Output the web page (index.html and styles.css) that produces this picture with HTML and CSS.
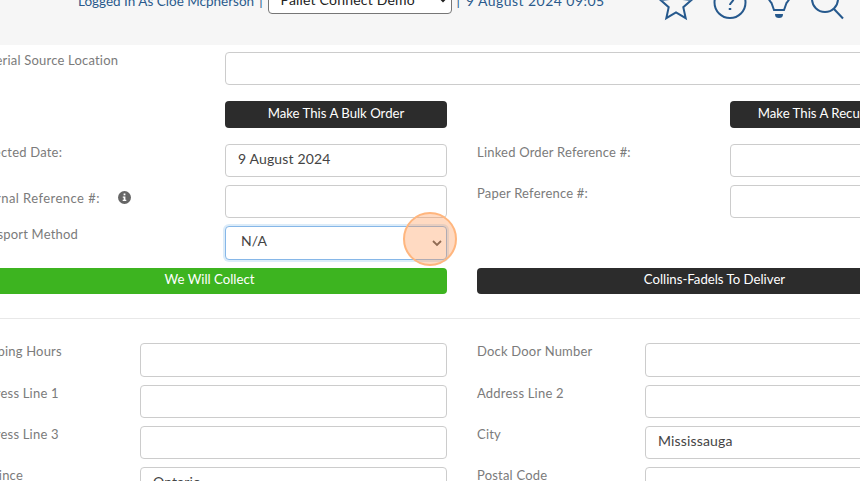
FILE: index.html
```html
<!DOCTYPE html>
<html lang="en">
<head>
<meta charset="utf-8">
<title>Order</title>
<link rel="stylesheet" href="styles.css">
</head>
<body>
<div class="page">
  <header class="topbar">
    <div class="userinfo">
      <span>Logged In As Cloe Mcpherson</span>
      <span>|</span>
      <select class="company"><option>Pallet Connect Demo</option></select>
      <span>|</span>
      <span class="stamp">9 August 2024 09:05</span>
    </div>
    <div class="tools">
      <svg class="tool star" width="36" height="36" viewBox="0 -2 36 36"><path d="M18 2.500l4.600 10.300 11 1.100-8.300 7.300 2.400 11-9.700-5.700-9.700 5.700 2.400-11-8.300-7.300 11-1.100z"/></svg>
      <svg class="tool help" width="36" height="36" viewBox="0 -.5 36 36"><circle cx="18" cy="18" r="15.500"/><path d="M14.500 14.500c0-4.500 7-4.500 7 0 0 2.800-3.500 3-3.500 6"/><path class="dot" d="M18 23.500v2"/></svg>
      <svg class="tool" width="36" height="36" viewBox="0 1 36 36"><path d="M13 27l-2.500-7C8 17 6 14.500 6 11 6 4.500 11.500 0 18 0s12 4.500 12 11c0 3.500-2 6-4.500 9L23 27z"/><path class="solid" d="M14 31h8c0 3-1.500 4-4 4s-4-1-4-4z"/></svg>
      <svg class="tool" width="36" height="36" viewBox="0 0 36 36"><circle cx="16" cy="15" r="13"/><path d="M25 25l9 9.500"/></svg>
    </div>
  </header>

  <main class="form">
    <div class="field wide">
      <label class="lbl">Material Source Location</label>
      <input class="ctl" type="text">
    </div>

    <div class="pair gap-y">
      <div class="field"><span></span><button class="btn dark">Make This A Bulk Order</button></div>
      <div class="field"><span></span><button class="btn dark">Make This A Recurring Order</button></div>
    </div>

    <div class="pair">
      <div class="field"><label class="lbl">Expected Date:</label><input class="ctl" type="text" value="9 August 2024"></div>
      <div class="field"><label class="lbl">Linked Order Reference #:</label><input class="ctl" type="text"></div>
    </div>
    <div class="pair">
      <div class="field">
        <label class="lbl lbl-info"><span class="wider">Internal Reference #:</span>
          <svg class="info" width="13" height="13" viewBox="0 0 13 13"><circle cx="6.500" cy="6.500" r="6.500"/><rect class="glyph" x="5.600" y="2.500" width="1.800" height="1.800"/><path class="glyph" d="M4.800 5.500h2.600v3.300h.9v1.200H4.700V8.800h1V6.700h-.9z"/></svg>
        </label>
        <input class="ctl" type="text">
      </div>
      <div class="field"><label class="lbl">Paper Reference #:</label><input class="ctl" type="text"></div>
    </div>
    <div class="pair">
      <div class="field">
        <label class="lbl">Transport Method</label>
        <select class="ctl picker"><option>N/A</option></select>
      </div>
      <div></div>
    </div>
    <div class="pair">
      <button class="btn green">We Will Collect</button>
      <button class="btn dark short">Collins-Fadels To Deliver</button>
    </div>

    <hr class="rule">

    <div class="pair narrow">
      <div class="field"><label class="lbl">Shipping Hours</label><input class="ctl tall" type="text"></div>
      <div class="field"><label class="lbl">Dock Door Number</label><input class="ctl tall" type="text"></div>
    </div>
    <div class="pair narrow">
      <div class="field"><label class="lbl">Address Line 1</label><input class="ctl" type="text"></div>
      <div class="field"><label class="lbl">Address Line 2</label><input class="ctl" type="text"></div>
    </div>
    <div class="pair narrow">
      <div class="field"><label class="lbl">Address Line 3</label><input class="ctl" type="text"></div>
      <div class="field"><label class="lbl">City</label><input class="ctl" type="text" value="Mississauga"></div>
    </div>
    <div class="pair narrow">
      <div class="field"><label class="lbl">Province</label><input class="ctl" type="text" value="Ontario"></div>
      <div class="field"><label class="lbl">Postal Code</label><input class="ctl" type="text"></div>
    </div>
  </main>
</div>
<div class="spot"></div>
</body>
</html>
```
FILE: styles.css
```css
* { box-sizing: border-box; }
html, body { margin: 0; height: 100%; overflow: hidden; background: #fff; }
body { position: relative; font-family: Lato, "Liberation Sans", sans-serif; font-size: 14px; color: #444; }
.page { width: 980px; margin: -31px 0 0 -28px; }

.topbar { display: flex; height: 76px; background: #f6f6f6; padding: 0 0 0 106px; color: #2a5a8c; font-size: 13.5px; }
.userinfo { display: flex; align-items: flex-start; gap: 5px; width: 580px; height: 46px; line-height: 30px; }
.company { width: 184px; height: 30px; margin: 15px 0 0; border: 1px solid #767676; border-radius: 4px; background: #fff; color: #222; font: inherit; font-size: 14px; letter-spacing: .2px; padding: 0 8px; }
.userinfo span { margin-top: 17px; }
.userinfo .stamp { margin-left: 1px; font-size: 14px; letter-spacing: .45px; }
.tools { display: flex; gap: 12px; padding-top: 15px; }
.tool { fill: none; stroke: #26598d; stroke-width: 2; overflow: visible; }
.tool.star { margin-right: 5.5px; }
.tool.help { margin-right: 1.5px; }
.tool .solid { stroke: none; fill: #26598d; }
.tool .dot { stroke-width: 2.500; }

.form { width: 980px; padding-top: 7px; }
.pair { display: grid; grid-template-columns: 475px 475px; column-gap: 30px; margin-bottom: 8px; }
.field { display: grid; grid-template-columns: 253px 1fr; }
.wide { width: 980px; margin-bottom: 16px; }
.gap-y { margin-bottom: 16px; }
.narrow .field { grid-template-columns: 168px 1fr; }

.lbl { color: #7b7b7b; font-size: 13px; line-height: 17px; letter-spacing: .2px; }
.lbl-info { display: flex; align-items: flex-start; gap: 18px; line-height: 26px; }
.wider { letter-spacing: .45px; }
.info { margin-top: 6px; }
.info circle { fill: #666; }
.info .glyph { fill: #fff; }

.ctl { width: 100%; height: 33px; border: 1px solid #ccc; border-radius: 4px; background: #fff; color: #444; font: inherit; padding: 0 12px 4px; letter-spacing: .15px; outline: none; }
.ctl.tall { height: 34px; }
.picker { height: 34px; appearance: none; -webkit-appearance: none; padding-left: 15px; padding-bottom: 5px; border-color: #86b7e8; box-shadow: 0 0 0 2px #dcecf9;
  background: #fff url("data:image/svg+xml,%3Csvg xmlns='http://www.w3.org/2000/svg' width='12' height='8' viewBox='0 0 12 8'%3E%3Cpath d='M2 2l4 4 4-4' fill='none' stroke='%23555' stroke-width='1.800'/%3E%3C/svg%3E") no-repeat right 3px center; }

.btn { display: block; width: 100%; height: 27px; border: 0; border-radius: 4px; color: #fff; font: inherit; font-size: 13.2px; padding: 0 0 4px; text-align: center; }
.field .btn { width: 222px; }
.dark { background: #2c2c2c; }
.green { background: #3db420; height: 26px; }
.btn.short { height: 26px; }

.rule { width: 980px; border: 0; border-top: 1px solid #e8e8e8; margin: 24px 0; }

.spot { position: absolute; left: 403px; top: 212px; width: 54px; height: 54px; border-radius: 50%; background: rgba(255, 150, 80, .35); border: 2px solid #ffb67e; }
```
